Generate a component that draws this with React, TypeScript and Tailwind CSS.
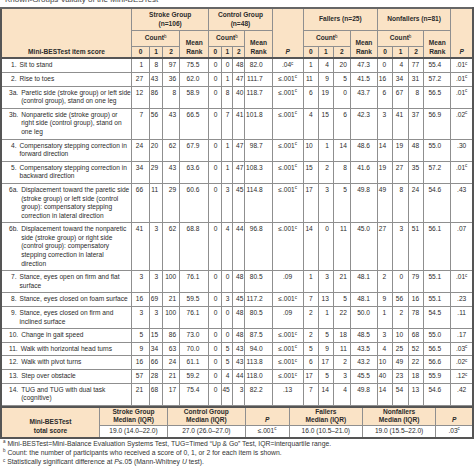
import React from 'react';

type Row = {
  n: string;
  lines: string[];
  s: string[];
  c: string[];
  p1: string;
  f: string[];
  nf: string[];
  p2: string;
};

// '*' at the end of a P value marks the "c" footnote
const rows: Row[] = [
  { n: '1.', lines: ['Sit to stand'], s: ['1', '8', '97', '75.5'], c: ['0', '0', '48', '82.0'], p1: '.04*', f: ['1', '4', '20', '47.3'], nf: ['0', '4', '77', '55.4'], p2: '.01*' },
  { n: '2.', lines: ['Rise to toes'], s: ['27', '43', '36', '62.0'], c: ['0', '1', '47', '111.7'], p1: '≤.001*', f: ['11', '9', '5', '41.5'], nf: ['16', '34', '31', '57.2'], p2: '.01*' },
  { n: '3a.', lines: ['Paretic side (stroke group) or left side', '(control group), stand on one leg'], s: ['12', '86', '8', '58.9'], c: ['0', '8', '40', '118.7'], p1: '≤.001*', f: ['6', '19', '0', '43.7'], nf: ['6', '67', '8', '56.5'], p2: '.01*' },
  { n: '3b.', lines: ['Nonparetic side (stroke group) or', 'right side (control group), stand on', 'one leg'], s: ['7', '56', '43', '66.5'], c: ['0', '7', '41', '101.8'], p1: '≤.001*', f: ['4', '15', '6', '42.3'], nf: ['3', '41', '37', '56.9'], p2: '.02*' },
  { n: '4.', lines: ['Compensatory stepping correction in', 'forward direction'], s: ['24', '20', '62', '67.9'], c: ['0', '1', '47', '98.7'], p1: '≤.001*', f: ['10', '1', '14', '48.6'], nf: ['14', '19', '48', '55.0'], p2: '.30' },
  { n: '5.', lines: ['Compensatory stepping correction in', 'backward direction'], s: ['34', '29', '43', '63.6'], c: ['0', '1', '47', '108.3'], p1: '≤.001*', f: ['15', '2', '8', '41.6'], nf: ['19', '27', '35', '57.2'], p2: '.01*' },
  { n: '6a.', lines: ['Displacement toward the paretic side', '(stroke group) or left side (control', 'group): compensatory stepping', 'correction in lateral direction'], s: ['66', '11', '29', '60.6'], c: ['0', '3', '45', '114.8'], p1: '≤.001*', f: ['17', '3', '5', '49.8'], nf: ['49', '8', '24', '54.6'], p2: '.43' },
  { n: '6b.', lines: ['Displacement toward the nonparetic', 'side (stroke group) or right side', '(control group): compensatory', 'stepping correction in lateral', 'direction'], s: ['41', '3', '62', '68.8'], c: ['0', '4', '44', '96.8'], p1: '≤.001*', f: ['14', '0', '11', '45.0'], nf: ['27', '3', '51', '56.1'], p2: '.07' },
  { n: '7.', lines: ['Stance, eyes open on firm and flat', 'surface'], s: ['3', '3', '100', '76.1'], c: ['0', '0', '48', '80.5'], p1: '.09', f: ['1', '3', '21', '48.1'], nf: ['2', '0', '79', '55.1'], p2: '.01*' },
  { n: '8.', lines: ['Stance, eyes closed on foam surface'], s: ['16', '69', '21', '59.5'], c: ['0', '3', '45', '117.2'], p1: '≤.001*', f: ['7', '13', '5', '48.1'], nf: ['9', '56', '16', '55.1'], p2: '.23' },
  { n: '9.', lines: ['Stance, eyes closed on firm and', 'inclined surface'], s: ['3', '3', '100', '76.1'], c: ['0', '0', '48', '80.5'], p1: '.09', f: ['2', '1', '22', '50.0'], nf: ['1', '2', '78', '54.5'], p2: '.11' },
  { n: '10.', lines: ['Change in gait speed'], s: ['5', '15', '86', '73.0'], c: ['0', '0', '48', '87.5'], p1: '≤.001*', f: ['2', '5', '18', '48.5'], nf: ['3', '10', '68', '55.0'], p2: '.17' },
  { n: '11.', lines: ['Walk with horizontal head turns'], s: ['9', '34', '63', '70.0'], c: ['0', '5', '43', '94.0'], p1: '≤.001*', f: ['5', '9', '11', '43.5'], nf: ['4', '25', '52', '56.5'], p2: '.03*' },
  { n: '12.', lines: ['Walk with pivot turns'], s: ['16', '66', '24', '61.1'], c: ['0', '5', '43', '113.8'], p1: '≤.001*', f: ['6', '17', '2', '43.2'], nf: ['10', '49', '22', '56.6'], p2: '.02*' },
  { n: '13.', lines: ['Step over obstacle'], s: ['57', '28', '21', '59.2'], c: ['0', '4', '44', '118.0'], p1: '≤.001*', f: ['17', '5', '3', '45.5'], nf: ['40', '23', '18', '55.9'], p2: '.12*' },
  { n: '14.', lines: ['TUG and TUG with dual task', '(cognitive)'], s: ['21', '68', '17', '75.4'], c: ['0', '45', '3', '82.2'], p1: '.13', f: ['7', '14', '4', '49.8'], nf: ['14', '54', '13', '54.6'], p2: '.42' },
];

const widths = [130, 18, 13, 17, 29, 13, 11, 12, 27, 31, 15, 15, 17, 27, 15, 16, 15, 27, 22];
const sumWidths = [98, 68, 77, 44, 73, 73, 37];

const bd = 'border border-[#8f8f8f]';
const head = 'bg-[#fae3c6] font-bold';

// superscript that does not push the line box taller
function Sup({ t }: { t: string }) {
  return <span className="relative -top-[2.5px] text-[4.5px] leading-none font-normal">{t}</span>;
}

function PVal({ v }: { v: string }) {
  const sig = v.endsWith('*');
  return (
    <>
      {sig ? v.slice(0, -1) : v}
      {sig && <Sup t="c" />}
    </>
  );
}

function Group({ vals, pads }: { vals: string[]; pads: string[] }) {
  return (
    <>
      {vals.map((v, i) => (
        <td key={i} className={`${bd} text-right align-top py-[2px] ${pads[i]}`}>
          {v}
        </td>
      ))}
    </>
  );
}

export default function App() {
  return (
    <div className="w-[474px] bg-white text-[#2b2b2b] font-['Liberation_Sans',Arial,sans-serif] text-[6.6px] leading-[8.6px]">
      <div className="h-[7px] overflow-hidden">
        <div className="-mt-[5px] pl-[5px] text-[8px] leading-[10px] text-[#444]">
          Known-Groups Validity of the Mini-BESTest
        </div>
      </div>

      <table className="w-[474px] table-fixed border-collapse border-x-2 border-x-[#555] border-t-2 border-t-[#666]">
        <colgroup>
          {widths.map((w, i) => (
            <col key={i} style={{ width: w }} />
          ))}
        </colgroup>
        <thead>
          <tr>
            <th rowSpan={3} className={`${bd} ${head} border-b-2 border-b-[#555] align-bottom pb-[1px]`}>
              Mini-BESTest item score
            </th>
            <th colSpan={4} className={`${bd} ${head} py-[2px]`}>
              Stroke Group
              <br />
              (n=106)
            </th>
            <th colSpan={4} className={`${bd} ${head} py-[2px]`}>
              Control Group
              <br />
              (n=48)
            </th>
            <th rowSpan={3} className={`${bd} ${head} border-b-2 border-b-[#555] align-bottom pb-[1px] italic`}>
              P
            </th>
            <th colSpan={4} className={`${bd} ${head} py-[2px]`}>
              Fallers (n=25)
            </th>
            <th colSpan={4} className={`${bd} ${head} py-[2px]`}>
              Nonfallers (n=81)
            </th>
            <th rowSpan={3} className={`${bd} ${head} border-b-2 border-b-[#555] align-bottom pb-[1px] italic`}>
              P
            </th>
          </tr>
          <tr>
            {[0, 1, 2, 3].map((g) => (
              <React.Fragment key={g}>
                <th colSpan={3} className={`${bd} ${head} py-[3px]`}>
                  Count
                  <Sup t="b" />
                </th>
                <th rowSpan={2} className={`${bd} ${head} border-b-2 border-b-[#555] align-bottom pb-[1px]`}>
                  Mean
                  <br />
                  Rank
                </th>
              </React.Fragment>
            ))}
          </tr>
          <tr>
            {[0, 1, 2, 3].map((g) => (
              <React.Fragment key={g}>
                {['0', '1', '2'].map((d) => (
                  <th key={d} className={`${bd} ${head} border-b-2 border-b-[#555] py-[1px]`}>
                    {d}
                  </th>
                ))}
              </React.Fragment>
            ))}
          </tr>
        </thead>
        <tbody>
          {rows.map((r) => (
            <tr key={r.n}>
              <td className={`${bd} align-top py-[2px] ${r.n.length > 2 ? 'pl-[7px]' : 'pl-[9px]'}`}>
                <div className="flex">
                  <span className="shrink-0 pr-[3px]">{r.n}</span>
                  <span>
                    {r.lines.map((l, i) => (
                      <React.Fragment key={i}>
                        {i > 0 && <br />}
                        {l}
                      </React.Fragment>
                    ))}
                  </span>
                </div>
              </td>
              <Group vals={r.s} pads={['pr-[6px]', 'pr-[4px]', 'pr-[3px]', 'pr-[9px]']} />
              <Group vals={r.c} pads={['pr-[4px]', 'pr-[3px]', 'pr-[1px]', 'pr-[9px]']} />
              <td className={`${bd} text-center align-top py-[2px]`}>
                <PVal v={r.p1} />
              </td>
              <Group vals={r.f} pads={['pr-[5px]', 'pr-[4px]', 'pr-[3px]', 'pr-[7px]']} />
              <Group vals={r.nf} pads={['pr-[6px]', 'pr-[5px]', 'pr-[4px]', 'pr-[9px]']} />
              <td className={`${bd} text-center align-top py-[2px]`}>
                <PVal v={r.p2} />
              </td>
            </tr>
          ))}
        </tbody>
      </table>

      <table className="w-[474px] table-fixed border-collapse border-x-2 border-x-[#555] border-t-2 border-t-[#555] border-b-2 border-b-[#555]">
        <colgroup>
          {sumWidths.map((w, i) => (
            <col key={i} style={{ width: w }} />
          ))}
        </colgroup>
        <tbody>
          <tr>
            <td rowSpan={2} className={`${bd} ${head} text-center align-bottom pb-[1px]`}>
              Mini-BESTest
              <br />
              total score
            </td>
            <td className={`${bd} ${head} text-center py-0`}>
              Stroke Group
              <br />
              Median (IQR)
            </td>
            <td className={`${bd} ${head} text-center py-0`}>
              Control Group
              <br />
              Median (IQR)
            </td>
            <td className={`${bd} ${head} text-center italic py-0 align-bottom`}>P</td>
            <td className={`${bd} ${head} text-center py-0`}>
              Fallers
              <br />
              Median (IQR)
            </td>
            <td className={`${bd} ${head} text-center py-0`}>
              Nonfallers
              <br />
              Median (IQR)
            </td>
            <td className={`${bd} ${head} text-center italic py-0 align-bottom`}>P</td>
          </tr>
          <tr>
            <td className={`${bd} text-center py-[1px]`}>19.0 (14.0–22.0)</td>
            <td className={`${bd} text-center py-[1px]`}>27.0 (26.0–27.0)</td>
            <td className={`${bd} text-center py-[1px]`}>
              <PVal v="≤.001*" />
            </td>
            <td className={`${bd} text-center py-[1px]`}>16.0 (10.5–21.0)</td>
            <td className={`${bd} text-center py-[1px]`}>19.0 (15.5–22.0)</td>
            <td className={`${bd} text-center py-[1px]`}>
              <PVal v=".03*" />
            </td>
          </tr>
        </tbody>
      </table>

      <div className="pl-[3px] text-[6.8px] leading-[9.4px] text-[#333]">
        <div>
          <Sup t="a" /> Mini-BESTest=Mini-Balance Evaluation Systems Test, TUG=Timed “Up &amp; Go” Test, IQR=interquartile range.
        </div>
        <div>
          <Sup t="b" /> Count: the number of participants who received a score of 0, 1, or 2 for each item is shown.
        </div>
        <div>
          <Sup t="c" /> Statistically significant difference at <i>P</i>≤.05 (Mann-Whitney <i>U</i> test).
        </div>
      </div>
    </div>
  );
}
